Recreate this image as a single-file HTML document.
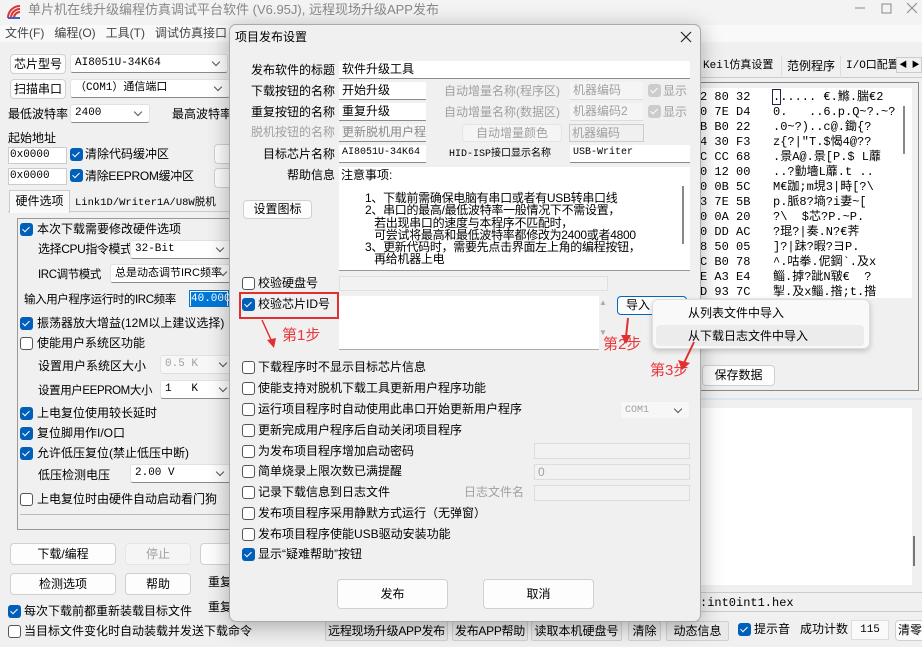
<!DOCTYPE html>
<html><head><meta charset="utf-8"><style>
*{box-sizing:border-box;margin:0;padding:0}
body{width:922px;height:647px;overflow:hidden;background:#f0f0f0;position:relative;font-family:"Liberation Sans","Noto Sans CJK SC",sans-serif;font-size:12px;color:#000}
.a{position:absolute;white-space:nowrap;line-height:14px}
.btn{position:absolute;background:#fdfdfd;border:1px solid #d0d0d0;border-radius:4px;text-align:center;white-space:nowrap}
.inp{position:absolute;background:#fff;border-bottom:1px solid #8a8a8a;white-space:nowrap;padding-left:3px;line-height:16px}
.cmb{position:absolute;background:#fff;border:1px solid #e2e2e2;border-bottom:1px solid #8a8a8a;border-radius:3px;white-space:nowrap;padding-left:4px;line-height:17px;font-family:"Liberation Mono","Noto Sans CJK SC",monospace;font-size:11px}
.cmb:after{content:"";position:absolute;right:8px;top:4px;width:5px;height:5px;border-right:1px solid #555;border-bottom:1px solid #555;transform:rotate(45deg)}
.cb{position:absolute;width:13px;height:13px;border:1px solid #555;border-radius:3px;background:#fff}
.ck{position:absolute;width:13px;height:13px;border-radius:3px;background:#005fb8}
.ck:after{content:"";position:absolute;left:4px;top:2px;width:3px;height:6px;border-right:1.5px solid #fff;border-bottom:1.5px solid #fff;transform:rotate(45deg)}
.g{color:#a0a0a0}
.m{font-family:"Liberation Mono","Noto Sans CJK SC",monospace;font-size:10px}
.red{color:#e8383d;font-size:15px}
</style></head><body>
<!-- title bar -->
<div class="a" style="left:0;top:0;width:922px;height:25px;background:#f3f3f3"></div>
<div class="a" style="left:6px;top:4px;width:16px;height:16px"><svg width="16" height="16"><path d="M2 14 A12 12 0 0 1 14 2" stroke="#d33" stroke-width="2" fill="none"/><path d="M5 14 A9 9 0 0 1 14 5" stroke="#d33" stroke-width="2" fill="none"/><path d="M8 14 A6 6 0 0 1 14 8" stroke="#d33" stroke-width="2" fill="none"/><rect x="2" y="13" width="12" height="2" fill="#36c"/></svg></div>
<div class="a" style="left:28px;top:3px;font-size:13px;color:#888">单片机在线升级编程仿真调试平台软件 (V6.95J), 远程现场升级APP发布</div>
<svg style="position:absolute;left:850px;top:0" width="72" height="20"><line x1="5" y1="8" x2="15" y2="8" stroke="#888"/><rect x="32" y="4" width="9" height="9" fill="none" stroke="#888"/><path d="M57 3 L67 13 M67 3 L57 13" stroke="#888"/></svg>
<!-- menu -->
<div class="a" style="left:0;top:25px;width:922px;height:17px;background:#f9f9f9"></div>
<div class="a" style="left:5px;top:26px;color:#444">文件(F) &nbsp; 编程(O) &nbsp; 工具(T) &nbsp; 调试仿真接口</div>

<!-- left panel -->
<div class="btn" style="left:10px;top:54px;width:56px;height:20px;line-height:18px">芯片型号</div>
<div class="cmb" style="left:70px;top:54px;width:158px;height:19px">AI8051U-34K64</div>
<div class="btn" style="left:10px;top:79px;width:56px;height:20px;line-height:18px">扫描串口</div>
<div class="cmb" style="left:70px;top:79px;width:160px;height:19px">（COM1）通信端口</div>
<div class="a" style="left:8px;top:107px">最低波特率</div>
<div class="cmb" style="left:70px;top:104px;width:80px;height:19px">2400</div>
<div class="a" style="left:172px;top:107px">最高波特率</div>
<div class="a" style="left:8px;top:131px">起始地址</div>
<div class="inp m" style="left:8px;top:147px;width:59px;height:17px;border:1px solid #ccc;line-height:15px;padding-left:1px;font-size:11px">0x0000</div>
<div class="ck" style="left:70px;top:148px"></div><div class="a" style="left:85px;top:147px">清除代码缓冲区</div>
<div class="inp m" style="left:8px;top:168px;width:59px;height:17px;border:1px solid #ccc;line-height:15px;padding-left:1px;font-size:11px">0x0000</div>
<div class="ck" style="left:70px;top:169px"></div><div class="a" style="left:85px;top:169px;letter-spacing:-0.3px">清除EEPROM缓冲区</div>
<div class="btn" style="left:214px;top:144px;width:20px;height:20px"></div>
<div class="btn" style="left:214px;top:168px;width:20px;height:20px"></div>
<div class="a" style="left:8px;top:190px;width:225px;height:22px;border-bottom:1px solid #ccc"></div>
<div class="a" style="left:9px;top:190px;width:61px;height:23px;background:#f9f9f9;border:1px solid #ccc;border-bottom:none;text-align:center;line-height:20px">硬件选项</div>
<div class="a m" style="left:75px;top:196px;font-size:10.5px">Link1D/Writer1A/U8W脱机</div>
<div class="a" style="left:17px;top:218px;width:220px;height:312px;border:1px solid #999;border-right:none"></div>
<div class="ck" style="left:20px;top:223px"></div><div class="a" style="left:37px;top:222px">本次下载需要修改硬件选项</div>
<div class="a" style="left:38px;top:242px;letter-spacing:-0.4px">选择CPU指令模式</div>
<div class="cmb" style="left:130px;top:240px;width:102px;height:19px">32-Bit</div>
<div class="a" style="left:38px;top:268px;letter-spacing:-0.4px;font-size:11.5px">IRC调节模式</div>
<div class="cmb" style="left:110px;top:264px;width:125px;height:19px;font-family:'Liberation Sans','Noto Sans CJK SC',sans-serif">总是动态调节IRC频率</div>
<div class="a" style="left:24px;top:293px;letter-spacing:-0.4px;font-size:11.5px">输入用户程序运行时的IRC频率</div>
<div class="a m" style="left:189px;top:290px;width:40px;height:17px;border:1px solid #0078d7;background:#fff;padding:1px"><span style="background:#0078d7;color:#fff;display:block;line-height:14px;font-size:11px">40.000</span></div>
<div class="ck" style="left:20px;top:317px"></div><div class="a" style="left:37px;top:316px">振荡器放大增益(12M以上建议选择)</div>
<div class="cb" style="left:20px;top:337px"></div><div class="a" style="left:37px;top:336px">使能用户系统区功能</div>
<div class="a" style="left:38px;top:359px">设置用户系统区大小</div>
<div class="cmb g" style="left:160px;top:355px;width:75px;height:19px;background:#f7f7f7;border-bottom-color:#ddd">0.5 K</div>
<div class="a" style="left:38px;top:384px;letter-spacing:-0.4px;font-size:11.5px">设置用户EEPROM大小</div>
<div class="cmb" style="left:160px;top:380px;width:75px;height:19px">1&nbsp;&nbsp; K</div>
<div class="ck" style="left:20px;top:407px"></div><div class="a" style="left:37px;top:406px">上电复位使用较长延时</div>
<div class="ck" style="left:20px;top:427px"></div><div class="a" style="left:37px;top:426px">复位脚用作I/O口</div>
<div class="ck" style="left:20px;top:447px"></div><div class="a" style="left:37px;top:446px">允许低压复位(禁止低压中断)</div>
<div class="a" style="left:38px;top:468px">低压检测电压</div>
<div class="cmb" style="left:130px;top:464px;width:102px;height:19px">2.00 V</div>
<div class="cb" style="left:20px;top:493px"></div><div class="a" style="left:37px;top:492px">上电复位时由硬件自动启动看门狗</div>
<div class="a" style="left:20px;top:514px;width:212px;height:1px;background:#bbb"></div>
<div class="btn" style="left:10px;top:543px;width:106px;height:22px;line-height:20px">下载/编程</div>
<div class="btn g" style="left:125px;top:543px;width:66px;height:22px;line-height:20px;background:#f5f5f5;border-color:#e5e5e5">停止</div>
<div class="btn" style="left:200px;top:543px;width:40px;height:22px"></div>
<div class="btn" style="left:10px;top:573px;width:106px;height:22px;line-height:20px">检测选项</div>
<div class="btn" style="left:125px;top:573px;width:66px;height:22px;line-height:20px">帮助</div>
<div class="a" style="left:208px;top:575px">重复</div>
<div class="a" style="left:208px;top:600px">重复</div>
<div class="ck" style="left:8px;top:605px"></div><div class="a" style="left:24px;top:604px">每次下载前都重新装载目标文件</div>
<div class="cb" style="left:8px;top:625px"></div><div class="a" style="left:24px;top:624px">当目标文件变化时自动装载并发送下载命令</div>

<!-- right panel -->
<div class="a" style="left:700px;top:56px;width:222px;height:22px;border-bottom:1px solid #ccc"></div>
<div class="a m" style="left:703px;top:59px;font-size:11px">Keil仿真设置</div>
<div class="a" style="left:781px;top:56px;width:1px;height:22px;background:#ddd"></div>
<div class="a" style="left:787px;top:59px">范例程序</div>
<div class="a" style="left:840px;top:56px;width:1px;height:22px;background:#ddd"></div>
<div class="a m" style="left:846px;top:59px;font-size:11px">I/O口配置</div>
<div class="a" style="left:896px;top:57px;width:26px;height:16px;background:#f0f0f0;border:1px solid #ccc;font-size:8px;line-height:14px">&nbsp;◀ &nbsp;▶</div>
<div class="a" style="left:700px;top:82px;width:219px;height:309px;border:1px solid #888"></div>
<div class="a" style="left:700px;top:88px;width:212px;height:210px;background:#fff"></div>
<div class="a" style="left:903px;top:106px;width:2px;height:48px;background:#888"></div>
<div class="a" style="left:700px;top:90px;line-height:15px;font-size:12px;white-space:pre;font-family:'Liberation Mono',monospace">2 80 32
0 7E D4
B B0 22
4 30 F3
C CC 68
0 12 00
0 0B 5C
3 7E 5B
0 0A 20
0 DD AC
8 50 05
C B0 78
E A3 E4
D 93 7C</div>
<div class="a" style="left:773px;top:90px;line-height:15px;font-size:12px;white-space:pre;font-family:'Liberation Mono','Noto Sans CJK SC',monospace"><span style="outline:1px solid #225">.</span>..... €.鰷.腨€2
0.   ..6.p.Q~?.~?
.0~?)..c@.鋤{?
z{?|"T.$愒4@??
.景A@.景[P.$ L蘼
..?勭墻L蘼.t ..
M€跏;m垷3|畤[?\
p.脈8?墒?i妻~[
?\  $芯?P.~P.
?琨?|奏.N?€荠
]?|跊?暇?ヨP.
^.咕拳.伲鋼`.及x
鲻.摢?跐N皲€  ?
掣.及x鲻.揝;t.揝</div>
<div class="btn" style="left:702px;top:365px;width:73px;height:21px;line-height:19px">保存数据</div>
<div class="a" style="left:700px;top:398px;width:222px;height:2px;background:#dde6ee"></div>
<div class="a" style="left:700px;top:408px;width:212px;height:177px;background:#fff"></div>
<div class="a" style="left:913px;top:536px;width:2px;height:30px;background:#777"></div>
<div class="a" style="left:700px;top:592px;width:222px;height:1px;background:#ccc"></div>
<div class="a m" style="left:700px;top:596px;font-size:12px">:int0int1.hex</div>
<div class="a" style="left:700px;top:611px;width:222px;height:1px;background:#ccc"></div>
<div class="btn" style="left:325px;top:621px;width:123px;height:20px;line-height:18px;border-radius:2px;background:#e9e9e9;letter-spacing:-0.3px">远程现场升级APP发布</div>
<div class="btn" style="left:452px;top:621px;width:76px;height:20px;line-height:18px;border-radius:2px;background:#e9e9e9;letter-spacing:-0.3px">发布APP帮助</div>
<div class="btn" style="left:531px;top:621px;width:91px;height:20px;line-height:18px;border-radius:2px;background:#e9e9e9">读取本机硬盘号</div>
<div class="btn" style="left:628px;top:621px;width:33px;height:20px;line-height:18px;border-radius:2px;background:#e9e9e9">清除</div>
<div class="btn" style="left:666px;top:621px;width:63px;height:20px;line-height:18px;border-radius:2px;background:#e9e9e9">动态信息</div>
<div class="ck" style="left:738px;top:623px"></div><div class="a" style="left:754px;top:622px">提示音</div>
<div class="a" style="left:800px;top:622px">成功计数</div>
<div class="a m" style="left:851px;top:620px;width:38px;height:20px;background:#fafafa;border:1px solid #ddd;text-align:center;line-height:18px;font-size:11px">115</div>
<div class="btn" style="left:895px;top:620px;width:30px;height:21px;line-height:19px;text-align:left;padding-left:2px">清零</div>

<!-- dialog -->
<div class="a" style="left:229px;top:24px;width:472px;height:598px;background:#f0f0f0;border:1px solid #aaa;border-radius:7px;box-shadow:0 4px 22px rgba(0,0,0,.3)"></div>
<div class="a" style="left:235px;top:30px;font-size:12px">项目发布设置</div>
<svg style="position:absolute;left:680px;top:31px" width="12" height="12"><path d="M1 1 L11 11 M11 1 L1 11" stroke="#222" stroke-width="1.2"/></svg>

<div class="a" style="left:251px;top:63px">发布软件的标题</div>
<div class="inp" style="left:339px;top:61px;width:351px;height:18px">软件升级工具</div>
<div class="a" style="left:251px;top:84px">下载按钮的名称</div>
<div class="inp" style="left:339px;top:82px;width:87px;height:18px">开始升级</div>
<div class="a g" style="left:444px;top:84px">自动增量名称(程序区)</div>
<div class="inp g" style="left:570px;top:82px;width:73px;height:18px;background:#f5f5f5;border-bottom-color:#ddd">机器编码</div>
<div class="ck" style="left:648px;top:84px;background:#ccc"></div><div class="a g" style="left:663px;top:84px">显示</div>
<div class="a" style="left:251px;top:105px">重复按钮的名称</div>
<div class="inp" style="left:339px;top:103px;width:87px;height:18px">重复升级</div>
<div class="a g" style="left:444px;top:105px">自动增量名称(数据区)</div>
<div class="inp g" style="left:570px;top:103px;width:73px;height:18px;background:#f5f5f5;border-bottom-color:#ddd">机器编码2</div>
<div class="ck" style="left:648px;top:105px;background:#ccc"></div><div class="a g" style="left:663px;top:105px">显示</div>
<div class="a g" style="left:251px;top:125px">脱机按钮的名称</div>
<div class="inp g" style="left:339px;top:124px;width:87px;height:18px;background:#f5f5f5;color:#888">更新脱机用户程</div>
<div class="btn g" style="left:462px;top:124px;width:100px;height:18px;line-height:16px;background:#f5f5f5;border-color:#e5e5e5">自动增量颜色</div>
<div class="a g" style="left:569px;top:124px;width:75px;height:18px;border:1px solid #ccc;background:#f0f0f0;line-height:16px;padding-left:2px">机器编码</div>
<div class="a" style="left:263px;top:147px">目标芯片名称</div>
<div class="inp m" style="left:339px;top:145px;width:87px;height:18px">AI8051U-34K64</div>
<div class="a m" style="left:449px;top:148px">HID-ISP接口显示名称</div>
<div class="inp m" style="left:570px;top:145px;width:120px;height:18px">USB-Writer</div>
<div class="a" style="left:287px;top:168px">帮助信息</div>
<div class="a" style="left:339px;top:167px;width:351px;height:104px;background:#fff;border-bottom:1px solid #999"></div>
<div class="a" style="left:341px;top:168px">注意事项:</div>
<div class="a" style="left:682px;top:186px;width:2px;height:58px;background:#888"></div>
<div class="a" style="left:365px;top:192px;line-height:12.3px;font-size:12px;white-space:pre;letter-spacing:-0.3px">1、下载前需确保电脑有串口或者有USB转串口线
2、串口的最高/最低波特率一般情况下不需设置，
   若出现串口的速度与本程序不匹配时，
   可尝试将最高和最低波特率都修改为2400或者4800
3、更新代码时，需要先点击界面左上角的编程按钮，
   再给机器上电</div>
<div class="btn" style="left:243px;top:200px;width:69px;height:19px;line-height:17px">设置图标</div>

<div class="cb" style="left:242px;top:277px"></div><div class="a" style="left:258px;top:276px">校验硬盘号</div>
<div class="a" style="left:339px;top:276px;width:269px;height:15px;border:1px solid #e0e0e0;background:#f2f2f2"></div>
<div class="a" style="left:339px;top:296px;width:260px;height:54px;background:#fff;border-bottom:1px solid #aaa"></div>
<div class="a" style="left:599px;top:296px;width:10px;height:54px;background:#f0f0f0;color:#aaa;font-size:8px;line-height:10px;padding-top:2px">▲<br><br><br>▼</div>
<div class="ck" style="left:242px;top:298px"></div><div class="a" style="left:258px;top:297px">校验芯片ID号</div>
<div class="a" style="left:239px;top:292px;width:100px;height:27px;border:2px solid #e03030"></div>
<div class="a" style="left:617px;top:296px;width:70px;height:19px;border:1px solid #0067c0;border-radius:4px;background:#fdfdfd;padding-left:8px;line-height:17px">导入</div>
<div class="a" style="left:652px;top:299px;width:218px;height:50px;background:#f9f9f9;border:1px solid #ddd;border-radius:6px;box-shadow:0 2px 6px rgba(0,0,0,.2)"></div>
<div class="a" style="left:656px;top:325px;width:208px;height:21px;background:#ececec;border-radius:4px"></div>
<div class="a" style="left:688px;top:306px">从列表文件中导入</div>
<div class="a" style="left:688px;top:329px">从下载日志文件中导入</div>

<div class="a red" style="left:282px;top:329px">第1步</div>
<div class="a red" style="left:603px;top:338px">第2步</div>
<div class="a red" style="left:650px;top:364px">第3步</div>
<svg style="position:absolute;left:250px;top:310px" width="460" height="80">
<path d="M12 10 L22 32" stroke="#e03030" stroke-width="1.5"/><path d="M17 30 L24 38 L26 28 Z" fill="#e03030"/>
<path d="M378 8 L376 27" stroke="#e03030" stroke-width="2"/><path d="M371 25 L376 34 L381 25 Z" fill="#e03030"/>
<path d="M444 32 L434 53" stroke="#e03030" stroke-width="2"/><path d="M428 50 L432 60 L440 53 Z" fill="#e03030"/>
</svg>

<div class="cb" style="left:242px;top:361px"></div><div class="a" style="left:258px;top:360px">下载程序时不显示目标芯片信息</div>
<div class="cb" style="left:242px;top:382px"></div><div class="a" style="left:258px;top:381px">使能支持对脱机下载工具更新用户程序功能</div>
<div class="cb" style="left:242px;top:403px"></div><div class="a" style="left:258px;top:402px">运行项目程序时自动使用此串口开始更新用户程序</div>
<div class="cmb g" style="left:620px;top:401px;width:70px;height:18px;background:#f7f7f7;border-color:#eee;font-size:10px">COM1</div>
<div class="cb" style="left:242px;top:424px"></div><div class="a" style="left:258px;top:423px">更新完成用户程序后自动关闭项目程序</div>
<div class="cb" style="left:242px;top:445px"></div><div class="a" style="left:258px;top:444px">为发布项目程序增加启动密码</div>
<div class="a" style="left:534px;top:443px;width:156px;height:16px;border:1px solid #ddd;background:#f2f2f2"></div>
<div class="cb" style="left:242px;top:465px"></div><div class="a" style="left:258px;top:464px">简单烧录上限次数已满提醒</div>
<div class="a g" style="left:534px;top:464px;width:156px;height:16px;border:1px solid #ddd;background:#f2f2f2;padding-left:3px;line-height:14px">0</div>
<div class="cb" style="left:242px;top:486px"></div><div class="a" style="left:258px;top:485px">记录下载信息到日志文件</div>
<div class="a g" style="left:464px;top:485px">日志文件名</div>
<div class="a" style="left:534px;top:485px;width:156px;height:16px;border:1px solid #ddd;background:#f2f2f2"></div>
<div class="cb" style="left:242px;top:507px"></div><div class="a" style="left:258px;top:506px">发布项目程序采用静默方式运行（无弹窗）</div>
<div class="cb" style="left:242px;top:528px"></div><div class="a" style="left:258px;top:527px">发布项目程序使能USB驱动安装功能</div>
<div class="ck" style="left:242px;top:548px"></div><div class="a" style="left:258px;top:547px">显示“疑难帮助”按钮</div>
<div class="btn" style="left:337px;top:579px;width:111px;height:30px;line-height:28px">发布</div>
<div class="btn" style="left:483px;top:579px;width:111px;height:30px;line-height:28px">取消</div>
</body></html>
